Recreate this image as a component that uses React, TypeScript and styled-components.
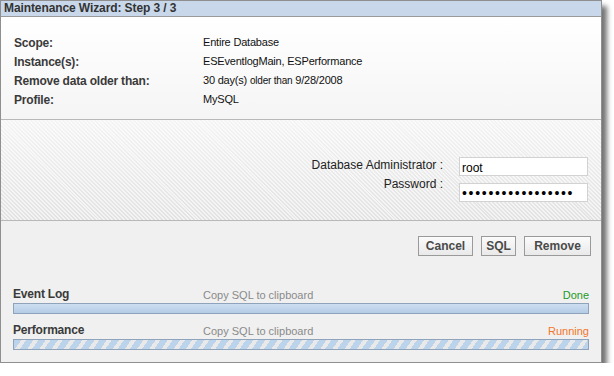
import * as React from "react";
import styled, { createGlobalStyle } from "styled-components";

const GlobalStyle = createGlobalStyle`
  html, body {
    margin: 0;
    padding: 0;
    background: #fff;
  }
  body {
    font-family: "Liberation Sans", Arial, sans-serif;
  }
`;

const Window = styled.div`
  width: 600px;
  height: 361px;
  border: 1px solid #8f8f8f;
  display: flex;
  flex-direction: column;
  box-shadow: 5px 6px 5px rgba(0, 0, 0, 0.55);
  background: #f0f0f0;
`;

const TitleBar = styled.div`
  height: 15px;
  line-height: 15px;
  padding-left: 3px;
  background: #c8d8ea;
  border-bottom: 1px solid #9a9a9a;
  font-size: 12px;
  font-weight: bold;
  color: #333;
  letter-spacing: -0.1px;
`;

const Summary = styled.div`
  height: 86px;
  padding: 16px 0 0 13px;
  background: linear-gradient(#ffffff, #f5f5f5);
  border-bottom: 1px solid #b8b8b8;
  display: grid;
  grid-template-columns: 189px 1fr;
  grid-auto-rows: 19px;
  align-content: start;
`;

const Label = styled.div`
  font-size: 12px;
  font-weight: bold;
  color: #3a3a3a;
  letter-spacing: -0.2px;
  line-height: 19px;
  padding-top: 1px;
`;

const Value = styled.div`
  font-size: 11px;
  color: #111;
  line-height: 19px;
  letter-spacing: -0.2px;

  small {
    font-size: 10px;
  }
`;

const Credentials = styled.div`
  height: 101px;
  box-sizing: border-box;
  padding: 37px 13px 0 0;
  border-bottom: 1px solid #b8b8b8;
  background:
    repeating-linear-gradient(
      45deg,
      rgba(255, 255, 255, 0.6) 0px,
      rgba(255, 255, 255, 0.6) 1.4px,
      rgba(255, 255, 255, 0) 1.4px,
      rgba(255, 255, 255, 0) 2.8px
    ),
    linear-gradient(#f4f4f4, #e2e2e2);
  display: flex;
  flex-direction: column;
  align-items: flex-end;
  gap: 7px;
`;

const FieldRow = styled.label`
  display: flex;
  align-items: flex-start;
  gap: 16px;
`;

const FieldLabel = styled.span<{ $shift: number }>`
  margin-top: ${(p) => p.$shift}px;
  font-size: 12px;
  line-height: 14px;
  color: #222;
`;

const Field = styled.input`
  width: 129px;
  height: 19px;
  box-sizing: border-box;
  border: 1px solid #d2d2d2;
  background: #fff;
  padding: 2px 0 0 2px;
  font-family: "Liberation Sans", Arial, sans-serif;
  font-size: 12px;
  color: #000;
  outline: none;

  &[type="password"] {
    font-size: 14px;
    letter-spacing: 1.7px;
    padding: 0 0 0 2px;
  }
`;

const Footer = styled.div`
  flex: 1;
  padding: 15px 10px 0 12px;
  display: flex;
  flex-direction: column;
`;

const Buttons = styled.div`
  display: flex;
  justify-content: flex-end;
  gap: 8px;
  margin-bottom: 29px;
`;

const Button = styled.button<{ $w: number }>`
  width: ${(p) => p.$w}px;
  height: 20px;
  padding: 0;
  border: 1px solid #9a9a9a;
  background: linear-gradient(#fbfbfb, #e9e9e9);
  font-family: "Liberation Sans", Arial, sans-serif;
  font-size: 12px;
  font-weight: bold;
  color: #4a4a4a;
`;

const Task = styled.div`
  margin-bottom: 7px;
  width: 576px;
`;

const TaskHead = styled.div`
  display: grid;
  grid-template-columns: 190px 1fr auto;
  align-items: end;
  height: 16px;
  margin-bottom: 2px;
`;

const TaskName = styled.div`
  font-size: 12px;
  font-weight: bold;
  color: #3a3a3a;
  letter-spacing: -0.2px;
`;

const TaskAction = styled.div`
  font-size: 11px;
  color: #8a8a8a;
`;

const TaskStatus = styled.div<{ $color: string }>`
  font-size: 11px;
  color: ${(p) => p.$color};
`;

const Bar = styled.div<{ $running?: boolean }>`
  height: 11px;
  box-sizing: border-box;
  border: 1px solid #8fa3bb;
  background: ${(p) =>
    p.$running
      ? `repeating-linear-gradient(
          125deg,
          #bcd3ec 0px,
          #bcd3ec 6px,
          #e9e9e9 6px,
          #e9e9e9 10px
        )`
      : "linear-gradient(#cddef0, #b5cce6)"};
`;

const tasks = [
  { name: "Event Log", status: "Done", color: "#1e9a1e", running: false },
  { name: "Performance", status: "Running", color: "#f27628", running: true },
];

function App() {
  return (
    <>
      <GlobalStyle />
      <Window>
        <TitleBar>Maintenance Wizard: Step 3 / 3</TitleBar>
        <Summary>
          <Label>Scope:</Label>
          <Value>Entire Database</Value>
          <Label>Instance(s):</Label>
          <Value>ESEventlogMain, ESPerformance</Value>
          <Label>Remove data older than:</Label>
          <Value>
            30 day(s) <small>older than</small> 9/28/2008
          </Value>
          <Label>Profile:</Label>
          <Value>MySQL</Value>
        </Summary>
        <Credentials>
          <FieldRow>
            <FieldLabel $shift={1}>Database Administrator :</FieldLabel>
            <Field type="text" defaultValue="root" />
          </FieldRow>
          <FieldRow>
            <FieldLabel $shift={-6}>Password :</FieldLabel>
            <Field type="password" defaultValue="xxxxxxxxxxxxxxxxx" />
          </FieldRow>
        </Credentials>
        <Footer>
          <Buttons>
            <Button $w={55}>Cancel</Button>
            <Button $w={35}>SQL</Button>
            <Button $w={67}>Remove</Button>
          </Buttons>
          {tasks.map((t) => (
            <Task key={t.name}>
              <TaskHead>
                <TaskName>{t.name}</TaskName>
                <TaskAction>Copy SQL to clipboard</TaskAction>
                <TaskStatus $color={t.color}>{t.status}</TaskStatus>
              </TaskHead>
              <Bar $running={t.running} />
            </Task>
          ))}
        </Footer>
      </Window>
    </>
  );
}

export default App;
